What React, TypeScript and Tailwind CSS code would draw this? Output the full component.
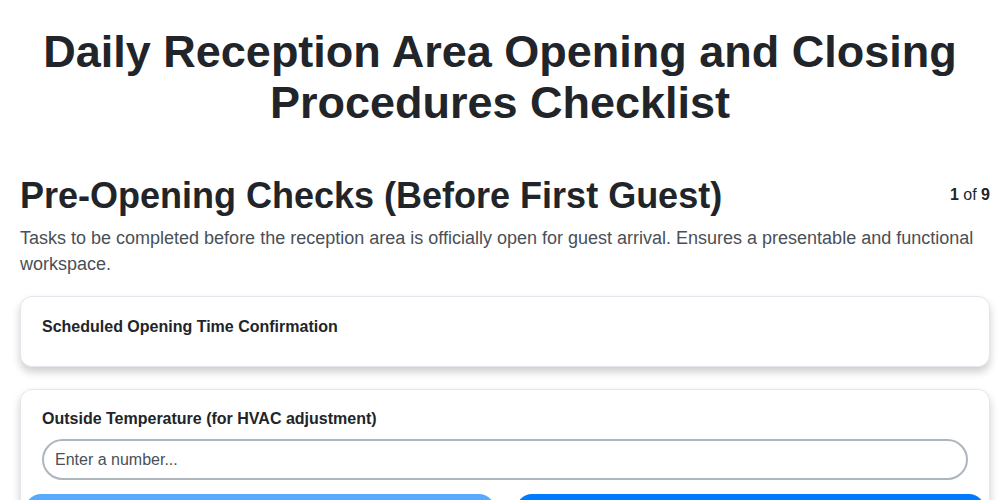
export default function App() {
  return (
    <div className="min-h-screen bg-white text-[#212529] font-['Liberation_Sans',Arial,sans-serif]">
      <h1 className="pt-[26px] text-center text-[45px] font-bold leading-[51px] text-[#212529]">
        Daily Reception Area Opening and Closing
        <br />
        Procedures Checklist
      </h1>

      <div className="pl-[20px] pr-[10px]">
        <div className="mt-[46px] flex items-start justify-between">
          <h2 className="text-[36px] font-bold leading-[44px]">Pre-Opening Checks (Before First Guest)</h2>
          <div className="pt-[9px] text-[16px] text-[#212529]">
            <span className="font-bold">1</span> of <span className="font-bold">9</span>
          </div>
        </div>
        <p className="mt-[7px] text-[18px] leading-[26px] text-[#495057]">
          Tasks to be completed before the reception area is officially open for guest arrival. Ensures a presentable and functional workspace.
        </p>

        <div className="mt-[19px] flex flex-col gap-[22px]">
          <div className="h-[71px] rounded-[12px] border border-[#e6e6ee] bg-white px-[21px] pt-[20px] shadow-[0_5px_9px_rgba(0,0,0,0.2)]">
            <div className="text-[16px] font-bold leading-[20px]">Scheduled Opening Time Confirmation</div>
          </div>

          <div className="rounded-[12px] border border-[#e6e6ee] bg-white px-[21px] pt-[19px] shadow-[0_5px_9px_rgba(0,0,0,0.2)]">
            <div className="text-[16px] font-bold leading-[20px]">Outside Temperature (for HVAC adjustment)</div>
            <input
              type="text"
              placeholder="Enter a number..."
              className="mt-[10px] h-[41px] w-full rounded-full border-2 border-[#adb5bd] bg-white px-[11px] text-[16px] text-[#495057] outline-none placeholder:text-[#495057]"
            />
            <div className="-mx-[17px] mt-[14px] flex gap-[21px]">
              <button className="h-[44px] flex-1 rounded-[16px] bg-[#59a9ff] text-[16px] font-bold text-white">
                Previous
              </button>
              <button className="h-[44px] flex-1 rounded-[16px] bg-[#007bff] text-[16px] font-bold text-white">
                Next
              </button>
            </div>
            <div className="h-[20px]" />
          </div>
        </div>
      </div>
    </div>
  );
}
